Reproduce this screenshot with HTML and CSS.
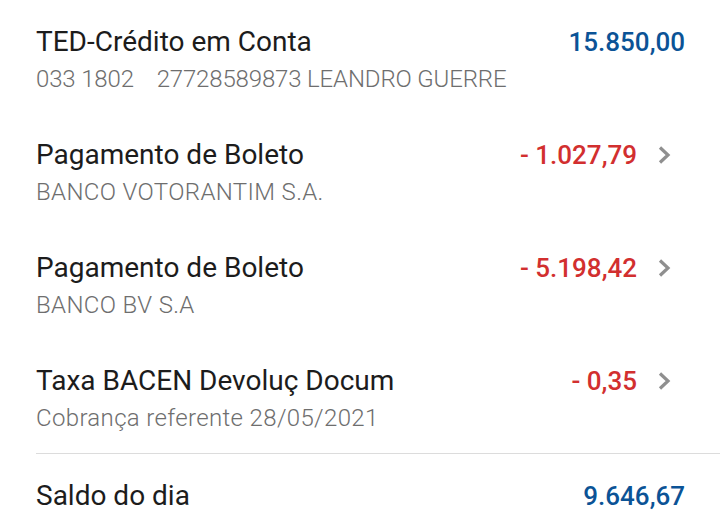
FILE: index.html
```html
<!DOCTYPE html>
<html lang="pt-BR">
<head>
<meta charset="utf-8">
<link rel="stylesheet" href="styles.css">
</head>
<body>
<div class="list">
  <div class="row">
    <div class="info">
      <div class="title">TED-Crédito em Conta</div>
      <div class="sub sub-code">033 1802&nbsp;&nbsp;&nbsp;&nbsp;27728589873 LEANDRO GUERRE</div>
    </div>
    <div class="amount credit">15.850,00</div>
  </div>
  <div class="row">
    <div class="info">
      <div class="title">Pagamento de Boleto</div>
      <div class="sub">BANCO VOTORANTIM S.A.</div>
    </div>
    <div class="amount debit">- 1.027,79</div>
    <svg class="chev" viewBox="0 0 15 20"><path d="M3 2.5 L11 10 L3 17.5" fill="none" stroke="#8f8f8f" stroke-width="3.2"/></svg>
  </div>
  <div class="row">
    <div class="info">
      <div class="title">Pagamento de Boleto</div>
      <div class="sub">BANCO BV S.A</div>
    </div>
    <div class="amount debit">- 5.198,42</div>
    <svg class="chev" viewBox="0 0 15 20"><path d="M3 2.5 L11 10 L3 17.5" fill="none" stroke="#8f8f8f" stroke-width="3.2"/></svg>
  </div>
  <div class="row">
    <div class="info">
      <div class="title">Taxa BACEN Devoluç Docum</div>
      <div class="sub">Cobrança referente 28/05/2021</div>
    </div>
    <div class="amount debit">- 0,35</div>
    <svg class="chev" viewBox="0 0 15 20"><path d="M3 2.5 L11 10 L3 17.5" fill="none" stroke="#8f8f8f" stroke-width="3.2"/></svg>
  </div>
  <div class="divider"></div>
  <div class="total">
    <div class="title">Saldo do dia</div>
    <div class="amount credit">9.646,67</div>
  </div>
</div>
</body>
</html>
```
FILE: styles.css
```css
html, body {
  margin: 0;
  padding: 0;
  background: #ffffff;
}
body {
  font-family: Roboto, "Noto Sans", sans-serif;
  width: 720px;
  height: 523px;
  overflow: hidden;
}
.list {
  padding: 23px 35px 0 36px;
}
.row {
  display: flex;
  align-items: flex-start;
  height: 113px;
}
.info {
  flex: 1;
}
.title {
  font-size: 28px;
  line-height: 38px;
  color: #1c1c1c;
  font-weight: 400;
}
.sub {
  font-size: 24px;
  line-height: 37px;
  color: #6e6e6e;
  font-weight: 300;
  letter-spacing: 0.35px;
}
.sub-code {
  letter-spacing: -0.15px;
}
.amount {
  font-size: 26px;
  line-height: 38px;
  font-weight: 500;
}
.credit { color: #0b5396; }
.debit { color: #d22f2f; }
.chev {
  width: 15px;
  height: 20px;
  margin: 9px 13px 0 20px;
}
.divider {
  height: 1px;
  background: #dcdcdc;
  margin: -22px -35px 0 0;
}
.total {
  display: flex;
  justify-content: space-between;
  padding-top: 23px;
}
```
